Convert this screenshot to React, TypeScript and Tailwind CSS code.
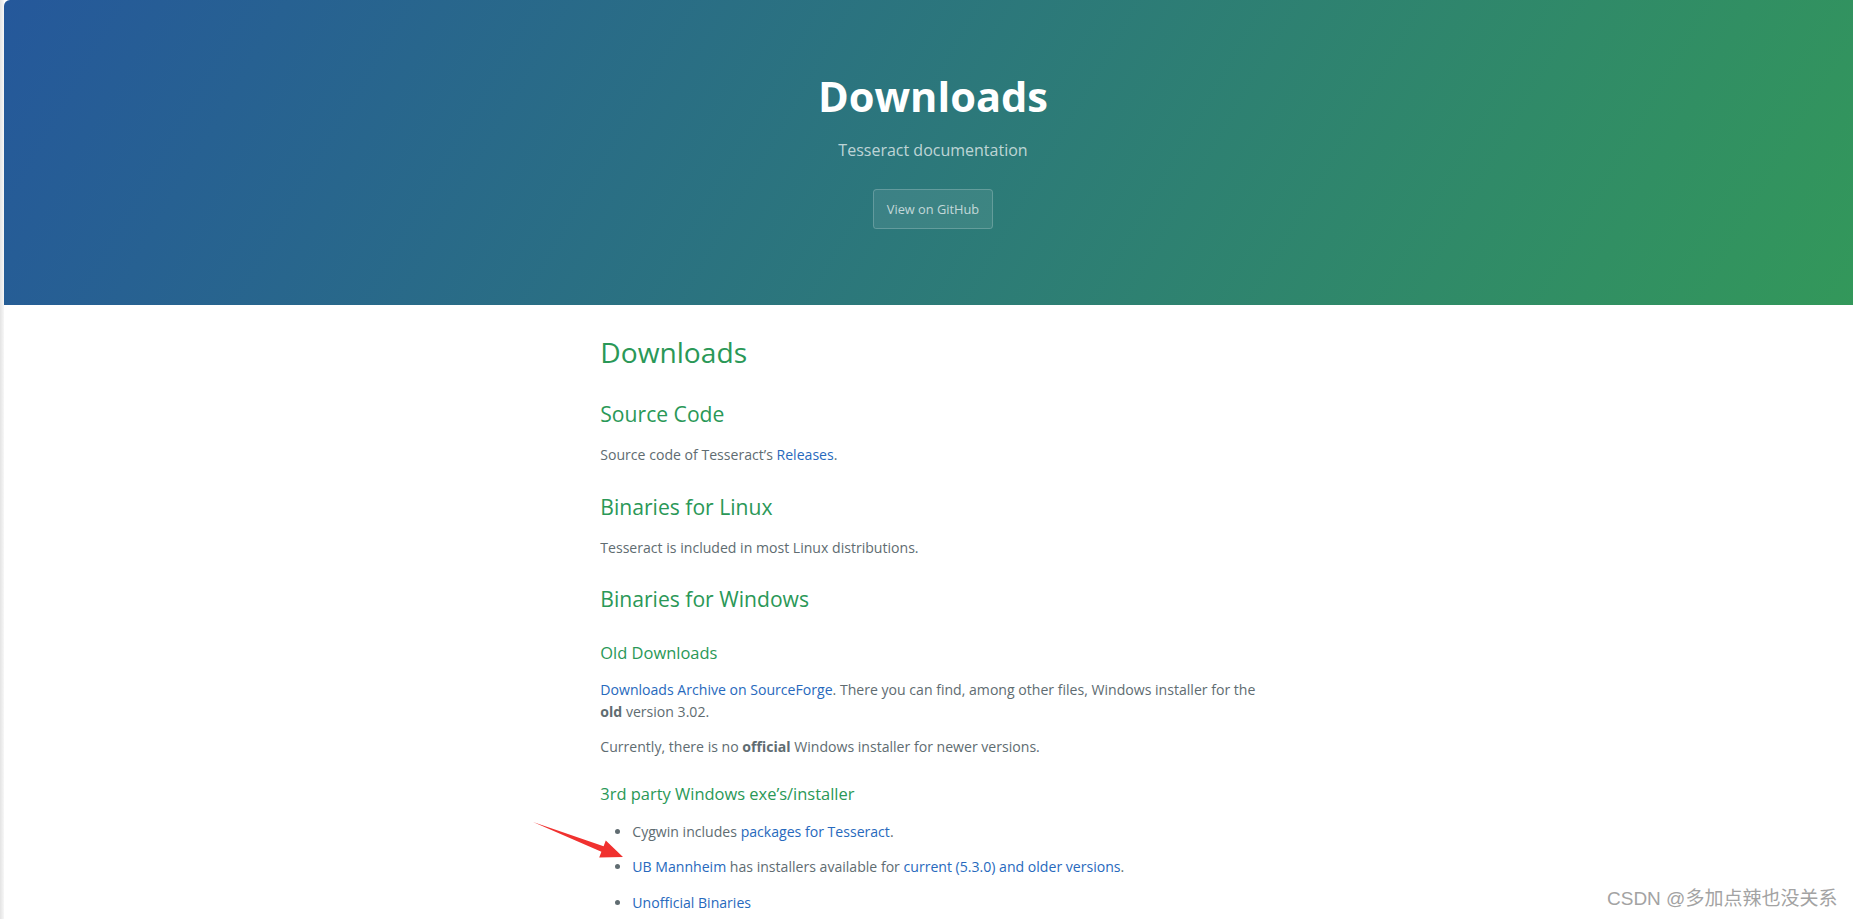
import React from 'react';

const link = 'text-[#2769bd]';

function Arrow() {
  return (
    <svg className="absolute left-[520px] top-[810px]" width="110" height="60" viewBox="0 0 110 60">
      <polygon points="13,12 83.6,36.2 85.8,30.6 103,47 79.2,47.4 81.4,41.8" fill="#f0312f" />
    </svg>
  );
}

function App() {
  return (
    <div className="relative flex h-screen overflow-hidden bg-white font-['Open_Sans',sans-serif]">
      <div className="w-[4px] shrink-0 bg-gradient-to-r from-[#e4e4e4] to-[#f7f7f7]" />
      <div className="w-[1858px] shrink-0">
        <header className="h-[305px] rounded-tl-[6px] bg-[linear-gradient(120deg,#25589b,#33985a)] pt-[67.5px] text-center">
          <h1 className="mb-[1.3px] text-[41.6px] font-bold leading-[56.7px] text-white">Downloads</h1>
          <h2 className="mt-[16px] mb-[27px] text-[16px] font-normal leading-[21.8px] text-white/70">Tesseract documentation</h2>
          <a className="inline-block rounded-[3.84px] border border-white/20 bg-white/[0.08] px-[12.8px] py-[9.6px] text-[12.8px] leading-[19.2px] text-white/70">
            View on GitHub
          </a>
        </header>

        <main className="mx-auto max-w-[819px] px-[76.8px] pt-[25.6px] text-[14.08px] leading-[1.5] text-[#606c71]">
          <h1 className="mb-[12.8px] text-[28.16px] font-normal text-[#2a9857]">Downloads</h1>

          <h2 className="mt-[25.6px] mb-[12.8px] text-[21.12px] font-normal text-[#2a9857]">Source Code</h2>
          <p className="my-[14.08px]">
            Source code of Tesseract’s <a className={link}>Releases</a>.
          </p>

          <h2 className="mt-[25.6px] mb-[12.8px] text-[21.12px] font-normal text-[#2a9857]">Binaries for Linux</h2>
          <p className="my-[14.08px]">Tesseract is included in most Linux distributions.</p>

          <h2 className="mt-[25.6px] mb-[12.8px] text-[21.12px] font-normal text-[#2a9857]">Binaries for Windows</h2>

          <h3 className="mt-[25.6px] mb-[12.8px] text-[16.47px] font-normal text-[#2a9857]">Old Downloads</h3>
          <p className="my-[14.08px]">
            <a className={link}>Downloads Archive on SourceForge</a>. There you can find, among other files, Windows installer for the{' '}
            <strong className="font-bold">old</strong> version 3.02.
          </p>
          <p className="my-[14.08px]">
            Currently, there is no <strong className="font-bold">official</strong> Windows installer for newer versions.
          </p>

          <h3 className="mt-[25.6px] mb-[12.8px] text-[16.47px] font-normal text-[#2a9857]">3rd party Windows exe’s/installer</h3>
          <ul className="my-[14.08px] list-disc pl-[32px]">
            <li>
              <p className="my-[14.08px]">
                Cygwin includes <a className={link}>packages for Tesseract</a>.
              </p>
            </li>
            <li>
              <p className="my-[14.08px]">
                <a className={link}>UB Mannheim</a> has installers available for <a className={link}>current (5.3.0) and older versions</a>.
              </p>
            </li>
            <li>
              <p className="my-[14.08px]">
                <a className={link}>Unofficial Binaries</a>
              </p>
            </li>
          </ul>
        </main>
      </div>

      <Arrow />

      <div className="absolute left-[1607px] top-[887px] whitespace-nowrap font-['Liberation_Sans','Noto_Sans_CJK_SC',sans-serif] text-[19px] leading-[24px] text-[#a3a3a3] [text-shadow:0_0_2px_#fff]">
        CSDN @多加点辣也没关系
      </div>
    </div>
  );
}

export default App;
